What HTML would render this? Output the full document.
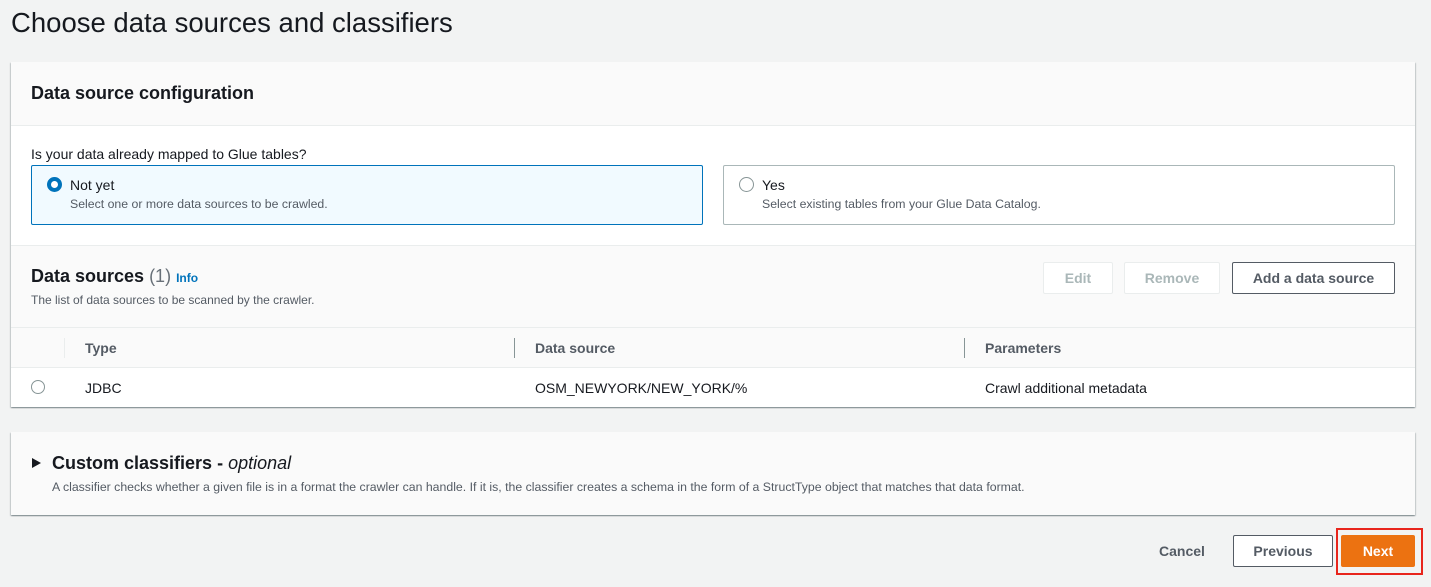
<!DOCTYPE html>
<html><head><style>
*{margin:0;padding:0;box-sizing:border-box}
body{width:1431px;height:587px;background:#f2f3f3;font-family:"Liberation Sans",sans-serif;color:#16191f;position:relative;overflow:hidden}
.a{position:absolute;white-space:nowrap}
.btn{position:absolute;border:1px solid #545b64;border-radius:2px;background:#fff;font-weight:bold;font-size:14px;text-align:center;color:#545b64}
</style></head><body>
<div class="a" style="left:11px;top:7px;font-size:27.5px;color:#16191f">Choose data sources and classifiers</div>

<div class="a" style="left:11px;top:62px;width:1404px;height:345px;background:#fff;box-shadow:0 1px 1px rgba(0,28,36,.3),1px 1px 1px rgba(0,28,36,.15),-1px 1px 1px rgba(0,28,36,.15)"></div>
<div class="a" style="left:11px;top:62px;width:1404px;height:64px;background:#fafafa;border-bottom:1px solid #eaeded"></div>
<div class="a" style="left:31px;top:83px;font-size:18px;font-weight:bold">Data source configuration</div>
<div class="a" style="left:31px;top:146px;font-size:14px">Is your data already mapped to Glue tables?</div>
<div class="a" style="left:31px;top:165px;width:672px;height:60px;background:#f1faff;border:1px solid #0073bb;border-radius:2px"></div>
<div class="a" style="left:47px;top:177px;width:15px;height:15px;border-radius:50%;border:4px solid #0073bb;background:#fff"></div>
<div class="a" style="left:70px;top:177px;font-size:14px">Not yet</div>
<div class="a" style="left:70px;top:197px;font-size:12.3px;color:#545b64">Select one or more data sources to be crawled.</div>
<div class="a" style="left:723px;top:165px;width:672px;height:60px;background:#fff;border:1px solid #aab7b8;border-radius:2px"></div>
<div class="a" style="left:739px;top:177px;width:15px;height:15px;border-radius:50%;border:1px solid #879596;background:#fff"></div>
<div class="a" style="left:762px;top:177px;font-size:14px">Yes</div>
<div class="a" style="left:762px;top:197px;font-size:12.3px;color:#545b64">Select existing tables from your Glue Data Catalog.</div>

<div class="a" style="left:11px;top:245px;width:1404px;height:122px;background:#fafafa;border-top:1px solid #eaeded"></div>
<div class="a" style="left:31px;top:266px;font-size:18px;font-weight:bold">Data sources <span style="font-weight:normal;color:#687078">(1)</span> <span style="font-size:12px;color:#0073bb;font-weight:bold">Info</span></div>
<div class="a" style="left:31px;top:293px;font-size:12px;color:#545b64">The list of data sources to be scanned by the crawler.</div>
<div class="btn" style="left:1043px;top:262px;width:70px;height:32px;line-height:30px;border-color:#eaeded;color:#aab7b8">Edit</div>
<div class="btn" style="left:1124px;top:262px;width:96px;height:32px;line-height:30px;border-color:#eaeded;color:#aab7b8">Remove</div>
<div class="btn" style="left:1232px;top:262px;width:163px;height:32px;line-height:30px">Add a data source</div>

<div class="a" style="left:11px;top:327px;width:1404px;height:1px;background:#eaeded"></div>
<div class="a" style="left:64px;top:338px;width:1px;height:20px;background:#eaeded"></div>
<div class="a" style="left:514px;top:338px;width:1px;height:20px;background:#879596"></div>
<div class="a" style="left:964px;top:338px;width:1px;height:20px;background:#879596"></div>
<div class="a" style="left:85px;top:340px;font-size:14px;font-weight:bold;color:#545b64">Type</div>
<div class="a" style="left:535px;top:340px;font-size:14px;font-weight:bold;color:#545b64">Data source</div>
<div class="a" style="left:985px;top:340px;font-size:14px;font-weight:bold;color:#545b64">Parameters</div>
<div class="a" style="left:11px;top:367px;width:1404px;height:40px;background:#fff;border-top:1px solid #eaeded"></div>
<div class="a" style="left:31px;top:380px;width:14px;height:14px;border-radius:50%;border:1px solid #879596"></div>
<div class="a" style="left:85px;top:380px;font-size:14px">JDBC</div>
<div class="a" style="left:535px;top:380px;font-size:14px">OSM_NEWYORK/NEW_YORK/%</div>
<div class="a" style="left:985px;top:380px;font-size:14px">Crawl additional metadata</div>

<div class="a" style="left:11px;top:432px;width:1404px;height:83px;background:#fafafa;box-shadow:0 1px 1px rgba(0,28,36,.3),1px 1px 1px rgba(0,28,36,.15),-1px 1px 1px rgba(0,28,36,.15)"></div>
<div class="a" style="left:32px;top:458px;width:0;height:0;border-left:9px solid #16191f;border-top:5px solid transparent;border-bottom:5px solid transparent"></div>
<div class="a" style="left:52px;top:453px;font-size:18px;font-weight:bold">Custom classifiers - <i style="font-weight:normal">optional</i></div>
<div class="a" style="left:52px;top:480px;font-size:12.3px;color:#545b64">A classifier checks whether a given file is in a format the crawler can handle. If it is, the classifier creates a schema in the form of a StructType object that matches that data format.</div>

<div class="a" style="left:1159px;top:543px;font-size:14px;font-weight:bold;color:#545b64">Cancel</div>
<div class="btn" style="left:1233px;top:535px;width:100px;height:32px;line-height:30px">Previous</div>
<div class="a" style="left:1336px;top:528px;width:87px;height:47px;border:2px solid #e8251c"></div>
<div class="btn" style="left:1341px;top:535px;width:74px;height:32px;line-height:30px;background:#ec7211;border-color:#ec7211;color:#fff">Next</div>
</body></html>
